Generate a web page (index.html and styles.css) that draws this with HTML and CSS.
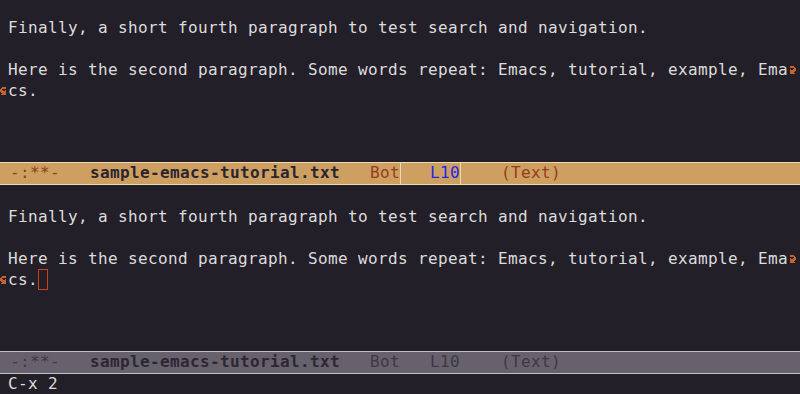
FILE: index.html
```html
<!DOCTYPE html>
<html lang="en">
<head>
    <meta charset="UTF-8">
    <title>Emacs - sample-emacs-tutorial.txt</title>
    <link rel="stylesheet" href="styles.css">
</head>
<body>
    <div class="frame">
        <div class="window first">
            <div class="body">
                <div class="line"><span class="fringe"></span><span class="text">Finally, a short fourth paragraph to test search and navigation.</span></div>
                <div class="line"></div>
                <div class="line"><span class="fringe"></span><span class="text">Here is the second paragraph. Some words repeat: Emacs, tutorial, example, Ema</span><span class="fringe"><svg class="arrow" width="8" height="8" viewBox="0 0 8 8"><path d="M2 0h4v1H2z M2 1h5v1H2z M6 2h2v1H6z M2 3h1v1H2z M5 3h3v1H5z M2 4h6v1H2z M2 5h5v1H2z M2 6h4v1H2z M2 7h5v1H2z"/></svg></span></div>
                <div class="line"><span class="fringe"><svg class="arrow" width="8" height="8" viewBox="0 0 8 8"><path d="M2 0h4v1H2z M1 1h5v1H1z M0 2h2v1H0z M0 3h3v1H0z M5 3h1v1H5z M0 4h6v1H0z M1 5h5v1H1z M2 6h4v1H2z M1 7h5v1H1z"/></svg></span><span class="text">cs.</span></div>
            </div>
            <div class="modeline active">
                <span class="seg state"> -:**-</span>
                <span class="seg name">sample-emacs-tutorial.txt</span>
                <span class="seg pos">   Bot</span>
                <span class="seg lineno">L10</span>
                <span class="seg mode">    (Text)</span>
            </div>
        </div>

        <div class="window second">
            <div class="body">
                <div class="line"><span class="fringe"></span><span class="text">Finally, a short fourth paragraph to test search and navigation.</span></div>
                <div class="line"></div>
                <div class="line"><span class="fringe"></span><span class="text">Here is the second paragraph. Some words repeat: Emacs, tutorial, example, Ema</span><span class="fringe"><svg class="arrow" width="8" height="8" viewBox="0 0 8 8"><path d="M2 0h4v1H2z M2 1h5v1H2z M6 2h2v1H6z M2 3h1v1H2z M5 3h3v1H5z M2 4h6v1H2z M2 5h5v1H2z M2 6h4v1H2z M2 7h5v1H2z"/></svg></span></div>
                <div class="line"><span class="fringe"><svg class="arrow" width="8" height="8" viewBox="0 0 8 8"><path d="M2 0h4v1H2z M1 1h5v1H1z M0 2h2v1H0z M0 3h3v1H0z M5 3h1v1H5z M0 4h6v1H0z M1 5h5v1H1z M2 6h4v1H2z M1 7h5v1H1z"/></svg></span><span class="text">cs.<span class="cursor"> </span></span></div>
            </div>
            <div class="modeline inactive">
                <span class="seg state"> -:**-</span>
                <span class="seg name">sample-emacs-tutorial.txt</span>
                <span class="seg pos">   Bot</span>
                <span class="seg lineno">L10</span>
                <span class="seg mode">    (Text)</span>
            </div>
        </div>

        <div class="minibuffer">C-x 2</div>
    </div>
</body>
</html>
```

FILE: styles.css
```css
body {
    margin: 0;
    background-color: #231f29;
    color: #dcdcdc;
    font-family: "DejaVu Sans Mono", monospace;
    font-size: 16px;
    letter-spacing: 0.367px;
}
.frame {
    width: 800px;
    height: 394px;
    overflow: hidden;
    display: flex;
    flex-direction: column;
}
.window {
    display: flex;
    flex-direction: column;
}
.body {
    box-sizing: border-box;
}
.first .body {
    height: 162px;
    padding-top: 17px;
}
.second .body {
    height: 166px;
    padding-top: 21px;
}
.line {
    display: flex;
    align-items: center;
    height: 21px;
    line-height: 21px;
    white-space: pre;
}
.fringe {
    width: 8px;
    height: 21px;
    display: flex;
    align-items: center;
}
.text {
    width: 780px;
}
.arrow {
    fill: #c4642a;
    shape-rendering: crispEdges;
}
.cursor {
    display: inline-block;
    box-sizing: border-box;
    width: 10px;
    height: 21px;
    vertical-align: top;
    border: 1px solid #c8421e;
    letter-spacing: 0;
}
.modeline {
    display: flex;
    box-sizing: border-box;
    height: 23px;
    border-top: 1px solid;
    border-bottom: 1px solid;
    white-space: pre;
}
.seg {
    box-sizing: border-box;
    line-height: 19px;
    padding-bottom: 2px;
}
.state {
    width: 90px;
}
.name {
    width: 250px;
    font-weight: bold;
}
.pos {
    width: 60px;
}
.lineno {
    width: 61px;
    text-align: right;
    border-left: 1px solid transparent;
    border-right: 1px solid transparent;
}
.mode {
    flex: 1;
}
.active {
    background-color: #cda062;
    border-color: #ecd9b6;
}
.active .state {
    color: #8c3f1e;
}
.active .name {
    color: #2a2430;
}
.active .pos,
.active .mode {
    color: #973b1d;
}
.active .lineno {
    color: #2323ee;
    border-color: #ecd9b6;
}
.inactive {
    background-color: #67616d;
    border-color: #c2bec6;
}
.inactive .state {
    color: #403a45;
}
.inactive .name {
    color: #2c2731;
}
.inactive .pos,
.inactive .lineno,
.inactive .mode {
    color: #3e3843;
}
.minibuffer {
    height: 20px;
    line-height: 20px;
    padding-left: 8px;
    white-space: pre;
}
```
